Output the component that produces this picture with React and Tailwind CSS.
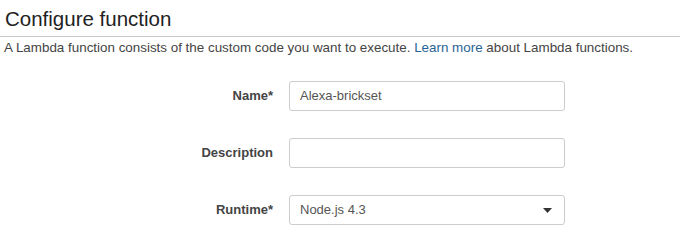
// Formulario "Configure function" de Lambda.
const Field = ({ label, children }) => (
  <div className="flex items-center">
    <label className="w-[289px] pr-[16px] text-right text-[13px] font-bold text-[#444]">
      {label}
    </label>
    {children}
  </div>
)

export default function App() {
  return (
    <div
      className="h-[241px] w-[680px] overflow-hidden bg-white"
      style={{ fontFamily: '"Liberation Sans", Arial, sans-serif' }}
    >
      <h1 className="border-b border-[#c8c8c8] px-[5px] pt-[6px] pb-[5px] text-[20.5px] leading-[25px] text-[#222]">
        Configure function
      </h1>
      <p className="px-[4px] pt-[3px] text-[13.4px] leading-[15px] text-[#444]">
        A Lambda function consists of the custom code you want to execute.{' '}
        <a className="text-[#2a6496]">Learn more</a> about Lambda functions.
      </p>

      <div className="mt-[26px] flex flex-col gap-[27px]">
        <Field label="Name*">
          <div className="flex h-[30px] w-[276px] items-center rounded-[3px] border border-[#ccc] px-[10px] text-[13px] text-[#555]">
            Alexa-brickset
          </div>
        </Field>
        <Field label="Description">
          <div className="h-[30px] w-[276px] rounded-[3px] border border-[#ccc]" />
        </Field>
        <Field label="Runtime*">
          <div className="flex h-[30px] w-[276px] items-center justify-between rounded-[3px] border border-[#ccc] pr-[12px] pl-[10px] text-[13px] text-[#555]">
            <span>Node.js 4.3</span>
            <svg width="9" height="5" viewBox="0 0 9 5" aria-hidden="true">
              <path d="M0 0h9L4.5 5z" fill="#333" />
            </svg>
          </div>
        </Field>
      </div>
    </div>
  )
}
